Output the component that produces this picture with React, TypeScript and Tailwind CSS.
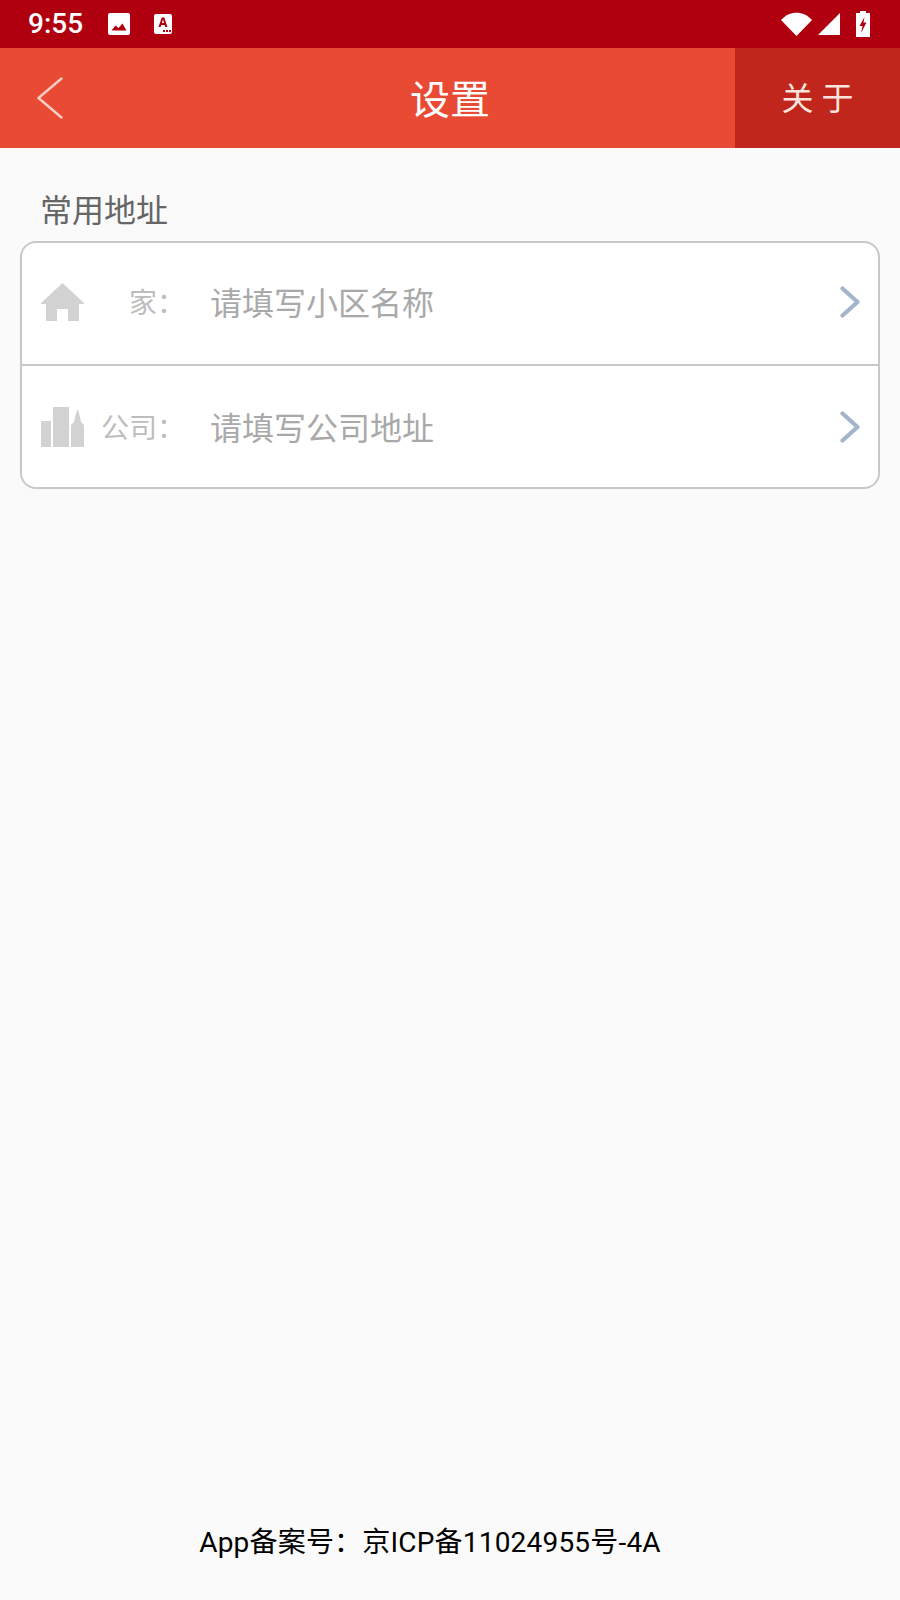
import * as React from 'react'

const cjk = "font-['Roboto','Noto_Sans_CJK_SC',sans-serif]"

const WifiIcon = () => (
    <svg width="31" height="24" viewBox="0 0 31 24"><path d="M0 8 C8.5 -1.8 22.5 -1.8 31 8 L15.5 24 Z" fill="#fff" /></svg>
)

const SignalIcon = () => (
    <svg width="22" height="22" viewBox="0 0 22 22"><path d="M0 22 L22 0 V22 Z" fill="#fff" /></svg>
)

const BatteryIcon = () => (
    <svg width="14" height="26" viewBox="0 0 14 26">
        <path d="M4 0 H10 V2 H14 V26 H0 V2 H4 Z" fill="#fff" />
        <path d="M8.5 6 L3.5 15 H6.5 L5 22 L10.5 11.5 H7.5 Z" fill="#b00010" />
    </svg>
)

const ImageIcon = () => (
    <svg width="22" height="22" viewBox="0 0 22 22">
        <rect width="22" height="22" rx="2" fill="#fff" />
        <path d="M3.5 17.5 L7.5 12.5 L10.5 15 L14.5 10.5 L18.5 17.5 Z" fill="#b00010" />
    </svg>
)

const NotifyIcon = () => (
    <svg width="18" height="20" viewBox="0 0 18 20">
        <rect width="18" height="20" rx="2" fill="#fff" />
        <path d="M4.5 13 L7.7 3.5 H10.3 L13.5 13 H11.3 L10.7 11 H7.3 L6.7 13 Z M7.9 9 H10.1 L9 5.5 Z" fill="#b00010" fillRule="evenodd" />
        <rect x="9" y="16" width="2" height="2" fill="#b00010" />
        <rect x="12" y="16" width="2" height="2" fill="#b00010" />
        <rect x="15" y="16" width="2" height="2" fill="#b00010" />
    </svg>
)

const HomeIcon = () => (
    <svg width="43" height="38" viewBox="0 0 43 38">
        <path d="M21.5 0 L43 20 V21 H38 V38 H27 V26 H16 V38 H5 V21 H0 V20 Z" fill="#d2d2d2" />
    </svg>
)

const CompanyIcon = () => (
    <svg width="43" height="40" viewBox="0 0 43 40">
        <rect x="0" y="14" width="10" height="26" fill="#d2d2d2" />
        <rect x="12" y="0" width="16" height="40" fill="#d2d2d2" />
        <path d="M30 40 V18 L33 15 L34.5 8 L36.5 2 L38.5 8 L40 15 L43 18 V40 Z" fill="#d2d2d2" />
    </svg>
)

const Chevron = () => (
    <svg width="20" height="32" viewBox="0 0 20 32" fill="none">
        <path d="M2.5 2.5 L17.5 16 L2.5 29.5" stroke="#a3b4cb" strokeWidth="4.2" strokeLinecap="round" strokeLinejoin="round" />
    </svg>
)

type RowProps = {
    icon: React.ReactNode
    label: string
    placeholder: string
    textOffset: string
    iconOffset: string
}

const AddressRow = ({ icon, label, placeholder, textOffset, iconOffset }: RowProps) => (
    <div className="flex h-[121px] items-center pl-[19px] pr-[18px]">
        <div className={`flex w-[43px] justify-center ${iconOffset}`}>{icon}</div>
        <div className={`w-[101px] text-right text-[28px] text-[#bdbdbd] ${textOffset}`}>{label}</div>
        <div className={`ml-[25px] flex-1 text-[32px] text-[#a9a9a9] ${textOffset}`}>{placeholder}</div>
        <div className={iconOffset}><Chevron /></div>
    </div>
)

const App = () => {
    return (
        <div className={`flex h-[1600px] w-[900px] flex-col bg-[#fafafa] ${cjk}`}>
            <div className="flex h-[48px] items-center bg-[#b00010] pl-[28px] pr-[30px]">
                <span className="text-[28px] font-medium text-white">9:55</span>
                <div className="ml-[25px] flex items-center"><ImageIcon /></div>
                <div className="ml-[24px] flex items-center"><NotifyIcon /></div>
                <div className="ml-auto flex items-center gap-[6px]">
                    <WifiIcon />
                    <SignalIcon />
                    <div className="ml-[10px]"><BatteryIcon /></div>
                </div>
            </div>
            <div className="flex h-[100px] items-center bg-[#e84a34]">
                <div className="flex w-[165px] pl-[37px]">
                    <svg width="26" height="42" viewBox="0 0 26 42" fill="none">
                        <path d="M24.5 1.5 L1.5 21 L24.5 40.5" stroke="#f9cfc5" strokeWidth="2.4" strokeLinecap="round" strokeLinejoin="round" />
                    </svg>
                </div>
                <div className="flex-1 pt-[6px] text-center text-[40px] text-white">设置</div>
                <div className="flex h-full w-[165px] items-center justify-center bg-[#c0261b] pt-[2px] text-[32px] text-[#fbe3de]">关 于</div>
            </div>
            <div className="pl-[40px] pt-[42px] text-[32px] leading-[42px] text-[#666666]">常用地址</div>
            <div className="mx-[20px] mt-[9px] rounded-[16px] border-2 border-[#c8c8c8] bg-white">
                <AddressRow icon={<HomeIcon />} label="家：" placeholder="请填写小区名称" textOffset="" iconOffset="pb-[3px]" />
                <div className="h-[2px] bg-[#c8c8c8]" />
                <AddressRow icon={<CompanyIcon />} label="公司：" placeholder="请填写公司地址" textOffset="pt-[5px]" iconOffset="" />
            </div>
            <div className="mt-auto pb-[37px] pr-[40px] text-center text-[28px] leading-[40px] tracking-[0.2px] text-black">App备案号：京ICP备11024955号-4A</div>
        </div>
    )
}

export default App
